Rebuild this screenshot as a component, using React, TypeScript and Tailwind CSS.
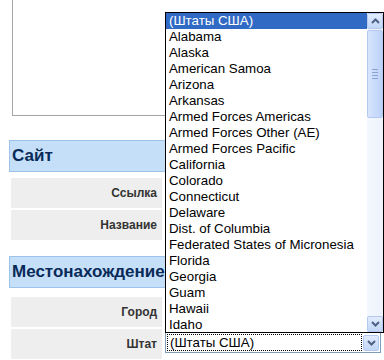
import React from 'react';

const states = [
    '(Штаты США)',
    'Alabama',
    'Alaska',
    'American Samoa',
    'Arizona',
    'Arkansas',
    'Armed Forces Americas',
    'Armed Forces Other (AE)',
    'Armed Forces Pacific',
    'California',
    'Colorado',
    'Connecticut',
    'Delaware',
    'Dist. of Columbia',
    'Federated States of Micronesia',
    'Florida',
    'Georgia',
    'Guam',
    'Hawaii',
    'Idaho',
];

const Chevron = ({ up = false }: { up?: boolean }) => (
    <svg width="9" height="6" viewBox="0 0 9 6" className={up ? 'rotate-180' : ''}>
        <path d="M1 1 L4.5 4.5 L8 1" fill="none" stroke="#4d6185" strokeWidth="2" />
    </svg>
);

const ArrowButton = ({ up = false }: { up?: boolean }) => (
    <div className="w-[16px] h-[16px] flex items-center justify-center rounded-[2px] border border-[#b4c8f0] bg-gradient-to-b from-[#e2ecfd] to-[#c2d6f7]">
        <Chevron up={up} />
    </div>
);

const Row = ({ label, children }: { label: string; children?: React.ReactNode }) => (
    <div className="flex gap-[3px] h-[30px]">
        <div className="w-[151px] bg-[#eeeeee] flex items-center justify-end pr-[5px] text-[12px] font-bold text-[#333333]">
            {label}
        </div>
        <div className="flex-1">{children}</div>
    </div>
);

const Header = ({ title }: { title: string }) => (
    <div className="ml-[9px] w-[370px] h-[32px] bg-[#c5dff8] border border-[#9ec3ea] flex items-center pl-[2px] text-[17px] font-bold text-[#082a58]">
        {title}
    </div>
);

export default function App() {
    return (
        <div
            className="relative w-[384px] h-[360px] overflow-hidden bg-white"
            style={{ fontFamily: '"Liberation Sans", Arial, sans-serif' }}
        >
            {/* textarea (top scrolled out of view) */}
            <div className="ml-[12px] w-[400px] h-[116px] border-l border-b border-[#a5a5a5]" />

            <div className="mt-[24px]">
                <Header title="Сайт" />
                <div className="mt-[6px] ml-[11px] flex flex-col gap-[2px]">
                    <Row label="Ссылка" />
                    <Row label="Название" />
                </div>
            </div>

            <div className="mt-[16px]">
                <Header title="Местонахождение" />
                <div className="mt-[9px] ml-[11px] flex flex-col gap-[2px]">
                    <Row label="Город" />
                    <Row label="Штат">
                        <div className="mt-[3px] w-[216px] h-[21px] border border-[#7f9db9] bg-white flex items-center p-[1px]">
                            <div className="flex-1 h-full border border-dotted border-black flex items-center pl-[2px] text-[13.3px] text-black">
                                (Штаты США)
                            </div>
                            <div className="ml-[1px]">
                                <ArrowButton />
                            </div>
                        </div>
                    </Row>
                </div>
            </div>

            {/* open dropdown list */}
            <div className="absolute left-[165px] top-[12px] w-[219px] h-[321px] border border-black bg-white flex">
                <div className="flex-1 flex flex-col">
                    {states.map((s, i) => (
                        <div
                            key={s}
                            className={
                                'h-[16px] leading-[16px] pl-[3px] text-[13.3px] whitespace-nowrap ' +
                                (i === 0 ? 'bg-[#316ac5] text-white' : 'text-black')
                            }
                        >
                            {s}
                        </div>
                    ))}
                </div>
                <div className="w-[16px] h-full flex flex-col bg-gradient-to-r from-[#f3f7fe] to-[#eef3fc]">
                    <ArrowButton up />
                    <div className="mt-[1px] h-[88px] rounded-[2px] border border-[#b4c8f0] bg-gradient-to-r from-[#d8e5fc] via-[#c9dbfb] to-[#bdd2f8] flex flex-col items-center justify-center gap-[2px]">
                        <div className="w-[6px] h-[1px] bg-[#8aa4d6]" />
                        <div className="w-[6px] h-[1px] bg-[#8aa4d6]" />
                        <div className="w-[6px] h-[1px] bg-[#8aa4d6]" />
                        <div className="w-[6px] h-[1px] bg-[#8aa4d6]" />
                    </div>
                    <div className="flex-1" />
                    <ArrowButton />
                </div>
            </div>
        </div>
    );
}
